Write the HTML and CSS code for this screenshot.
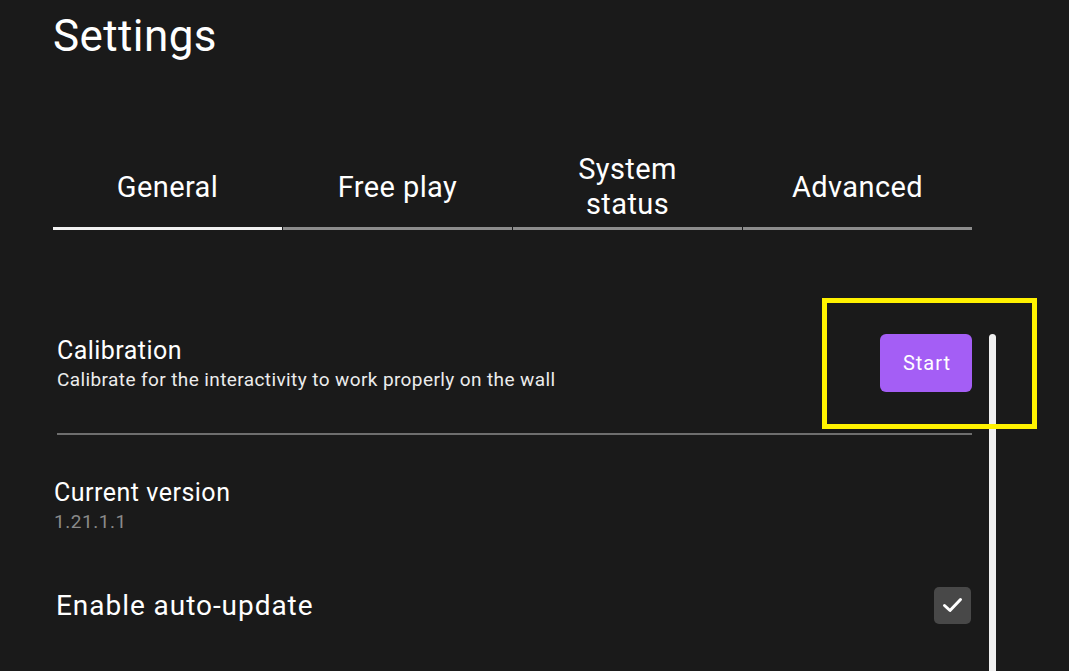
FILE: index.html
```html
<!DOCTYPE html>
<html lang="en">
<head>
<meta charset="utf-8">
<title>Settings</title>
<link rel="stylesheet" href="styles.css">
</head>
<body>
<div class="page">
  <h1 class="title">Settings</h1>
  <nav class="tabs">
    <div class="tab active">General</div>
    <div class="tab">Free play</div>
    <div class="tab">System<br>status</div>
    <div class="tab">Advanced</div>
  </nav>
  <section class="list">
    <div class="row calib">
      <div class="row-text">
        <div class="row-title calib-title">Calibration</div>
        <div class="row-sub">Calibrate for the interactivity to work properly on the wall</div>
      </div>
      <button class="btn-start">Start</button>
    </div>
    <div class="divider"></div>
    <div class="version">
      <div class="row-title version-title">Current version</div>
      <div class="version-num">1.21.1.1</div>
    </div>
    <div class="row auto">
      <div class="auto-label">Enable auto-update</div>
      <div class="checkbox">
        <svg width="37" height="37" viewBox="0 0 37 37"><polyline points="10.5,18.5 16,23.5 26.5,12.5" fill="none" stroke="#ffffff" stroke-width="3" stroke-linecap="round" stroke-linejoin="round"/></svg>
      </div>
    </div>
  </section>
</div>
<div class="scrollbar"></div>
<div class="highlight"></div>
</body>
</html>
```

FILE: styles.css
```css
html, body {
  margin: 0;
  padding: 0;
  background: #1a1a1a;
  height: 100%;
  overflow: hidden;
}
body {
  font-family: Roboto, "Noto Sans", sans-serif;
  color: #ffffff;
  position: relative;
}
.page {
  padding-left: 53px;
  width: 919px;
}
.title {
  margin: 0;
  padding-top: 14px;
  font-size: 44px;
  font-weight: 400;
  line-height: 44px;
  letter-spacing: 0.4px;
  color: #ffffff;
}
.tabs {
  display: flex;
  margin-top: 79px;
}
.tab {
  flex: 1;
  height: 80px;
  padding-top: 10px;
  display: flex;
  align-items: center;
  justify-content: center;
  text-align: center;
  font-size: 29px;
  line-height: 35px;
  letter-spacing: 0.4px;
  border-bottom: 3px solid #8c8c8c;
  margin-right: 1px;
}
.tab:last-child { margin-right: 0; }
.tab.active { border-bottom-color: #f2f2f2; }
.list {
  margin-top: 104px;
}
.row {
  display: flex;
  align-items: center;
  justify-content: space-between;
}
.calib {
  height: 58px;
  padding-left: 4px;
  padding-bottom: 41px;
}
.row-text {
  padding-top: 4px;
}
.row-title {
  font-size: 25px;
  line-height: 30px;
}
.calib-title { letter-spacing: 0.45px; }
.version-title { letter-spacing: 0.5px; }
.row-sub {
  font-size: 19px;
  line-height: 28px;
  letter-spacing: 0.4px;
  color: #ececec;
}
.btn-start {
  width: 92px;
  height: 58px;
  border: none;
  border-radius: 6px;
  background: #a45ef5;
  color: #ffffff;
  font-family: Roboto, sans-serif;
  font-size: 20px;
  letter-spacing: 1px;
  padding: 0 0 0 2px;
  margin-right: 0;
}
.divider {
  margin-left: 4px;
  height: 2px;
  background: #6e6e6e;
}
.version {
  padding-top: 43px;
  padding-left: 1px;
}
.version-num {
  font-size: 19px;
  line-height: 26px;
  letter-spacing: 0.55px;
  margin-top: 1px;
  color: #8a8a8a;
}
.auto {
  margin-top: 51px;
  padding-left: 3px;
}
.auto-label {
  font-size: 28px;
  line-height: 36px;
  letter-spacing: 0.95px;
  padding-top: 2px;
}
.checkbox {
  width: 37px;
  height: 37px;
  border-radius: 5px;
  background: #484848;
  margin-right: 1px;
}
.checkbox svg { display: block; }
.scrollbar {
  position: absolute;
  left: 989px;
  top: 334px;
  width: 7px;
  height: 400px;
  background: #f0f0f0;
  border-radius: 4px 4px 0 0;
}
.highlight {
  position: absolute;
  left: 822px;
  top: 298px;
  width: 215px;
  height: 131px;
  box-sizing: border-box;
  border: 5px solid #fff200;
}
```
